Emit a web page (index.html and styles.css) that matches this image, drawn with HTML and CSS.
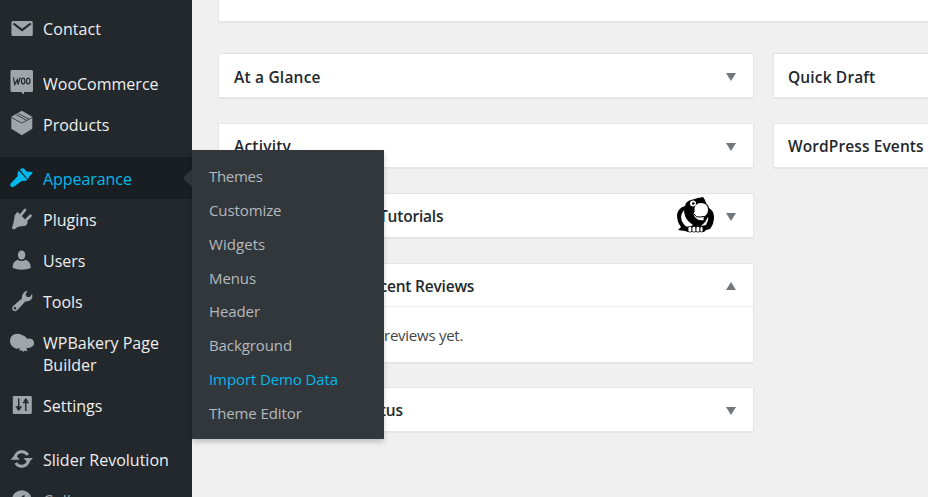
FILE: index.html
```html
<!DOCTYPE html>
<html lang="en">
<head>
<meta charset="utf-8">
<title>Dashboard</title>
<link rel="stylesheet" href="styles.css">
</head>
<body>
<div class="app">
  <nav class="sidebar">
    <a class="item"><svg viewBox="0 0 24 24"><rect x="1.400" y="5" width="21.400" height="15" rx="1.600"/><path class="cut" d="M3.500 7.500l8.600 6.600 8.600-6.600"/></svg><span class="t-contact">Contact</span></a>
    <a class="item group high"><svg viewBox="0 0 24 24"><path d="M2 0h19.500q1.500 0 1.500 1.500v19q0 1.500-1.500 1.500H14v2.500L11 22H2Q.5 22 .5 20.500v-19Q.5 0 2 0z"/><path class="cut thin" d="M3.500 7.500l1.300 7 2.600-5 .6 5 2.300-7"/><ellipse class="cut thin" cx="13.200" cy="11" rx="1.700" ry="2.900"/><ellipse class="cut thin" cx="18.200" cy="11" rx="1.700" ry="2.900"/></svg><span class="t-woo">WooCommerce</span></a>
    <a class="item high"><svg viewBox="0 0 24 24"><path d="M11.800-.2L22.300 5.700v12L11.800 24.300 1.300 17.700v-12z"/><path class="cut hair" d="M1.300 6.500l10.500 5.600L22.300 6.500M6.200 3.800l10.400 5.500M8.300 2.700L19 8.200"/></svg><span class="t-prod">Products</span></a>
    <a class="item current"><svg viewBox="0 0 24 24"><path d="M10 2.600q1.800-2 3.800-1l3.400 3.200q2.600-.3 5.600.2-.6 2.600-3.300 4.200l-1.700 3.200z"/><path d="M8.800 3.600l8.500 9.300q-2.400 1.600-5.300.8l-7 5.300q-2 1.500-3.800.7-1.800-1.400-.4-3.500l6.800-7q-.8-2.800 1.200-5.600z"/></svg><span class="t-app">Appearance</span></a>
    <a class="item"><svg viewBox="0 0 24 24"><path d="M7.500 4.800l10.500 10.500-2 3.500-6.500.7-3.200 1.200q-1.700 2.200-3.600 1.300-1.700-1.500 0-3.200l.8-3.400 1.300-7.400z"/><path class="prong" d="M11 8l4-5M16 13.200l4.500-4.500"/></svg><span class="t-plug">Plugins</span></a>
    <a class="item"><svg viewBox="0 0 24 24"><ellipse cx="11.600" cy="7" rx="3.700" ry="4.600"/><path d="M2.600 20q-.2-6.500 5-8.200 4 2.600 8 0 5.300 1.700 5.200 8.200-4 1.700-9 1.700t-9.200-1.700z"/></svg><span class="t-users">Users</span></a>
    <a class="item"><svg viewBox="0 0 24 24"><path d="M17.500 2l-2 3.500 1.500 2.400 3 .2 2.100-3.300q1.200 4.300-1.800 6.500-2.300 1.500-4.800 1L7.700 20.800q-2.200 2.500-4.700.7-2-2.400.5-4.700l8.600-7.600q-.5-3 1.200-5Q15 2 17.500 2z"/><circle class="hole" cx="5" cy="19.300" r="1.200"/></svg><span class="t-tools">Tools</span></a>
    <a class="item two"><svg viewBox="0 0 24 24"><path d="M0 10.500q.3-5 5-6.500 4-1 7 1 4.300 1.600 5 3.800 5.500-1.200 7 3.200.5 4-3.500 5.500-2.500.8-4 .2l.8 3.800-2.300-1-1.500 1.200-2.500-1.400-2 .2 1-2.500q-3 1.600-5.500 0Q0 15.500 0 10.500z"/></svg><span class="t-wpb">WPBakery Page<br><i class="t-build">Builder</i></span></a>
    <a class="item"><svg viewBox="0 0 24 24"><rect x="2.800" y="3" width="19" height="18" rx="1.300"/><path class="cut set" d="M8.700 5.500v11.500M5.700 14h6M15.800 6v12M12.800 9.500h6M7 15l1.700 2 1.700-2M14.100 8.200l1.700-2 1.700 2"/></svg><span class="t-set">Settings</span></a>
    <a class="item group"><svg viewBox="0 0 24 24"><path class="ring" d="M5.300 9.500A7 7 0 0 1 17.800 8M18.300 14.500A7 7 0 0 1 5.800 16"/><path d="M.5 12.800l4.700-5.300 4.700 5.300zM13.500 11h9.400l-4.700 5.300z"/></svg><span class="t-slide">Slider Revolution</span></a>
    <a class="item collapse"><svg viewBox="0 0 24 24"><circle cx="11.800" cy="12" r="9.800"/><path class="hole" d="M14.500 6.500v11l-7-5.500z"/></svg><span>Collapse</span></a>
    <div class="submenu">
      <a class="s1">Themes</a>
      <a class="s2">Customize</a>
      <a class="s3">Widgets</a>
      <a class="s4">Menus</a>
      <a class="s5">Header</a>
      <a class="s6">Background</a>
      <a class="s7 on">Import Demo Data</a>
      <a class="s8">Theme Editor</a>
    </div>
  </nav>
  <main class="content">
    <section class="card welcome"></section>
    <div class="columns">
      <div class="column">
        <section class="card"><h2><span class="c1">At a Glance</span><b class="down"></b></h2></section>
        <section class="card"><h2><span class="c2">Activity</span><b class="down"></b></h2></section>
        <section class="card"><h2><span class="c3">Tutorials</span>
          <svg class="bird" viewBox="0 0 37 36"><path d="M14 3l7-2 5-1 2 3 1 3q3 3 3 5 5 3 5 9 0 7-4 12l-4 1-2 2H11l-3-1-7-1 3-3Q0 25 0 18 1 11 8 9q1-5 6-6z"/><path class="w" d="M17.500 11q1.500-5 6.500-5 7 0 7 7 0 4-4 6.500-1 2.500 0 3.500-4 1-7-1-3-2-3.500-5 1.500-2 1-6zM7 13q0 6 4 11l5 4-3 1.500q-4 1-6-2-6-7 0-14.500zM31 20q1 2-2 8l-5 1q5-4 7-9z"/><circle class="w" cx="16" cy="6.500" r="3"/><circle cx="16.300" cy="6.500" r="1.300"/><path class="line" d="M17 17q2 4 6 3l4-.5"/><g class="feet"><rect x="11" y="29.500" width="4" height="5.500" rx="1.500"/><rect x="15" y="29.500" width="4" height="5.500" rx="1.500"/><rect x="19" y="29.500" width="4" height="5.500" rx="1.500"/><rect x="23" y="29.500" width="3" height="5.500" rx="1.500"/></g></svg>
          <b class="down"></b></h2></section>
        <section class="card reviews"><h2><span class="c4">Recent Reviews</span><b class="up"></b></h2><p><span>reviews yet.</span></p></section>
        <section class="card"><h2><span class="c5">Status</span><b class="down"></b></h2></section>
      </div>
      <div class="column">
        <section class="card"><h2><span class="c6">Quick Draft</span></h2></section>
        <section class="card"><h2><span class="c7">WordPress Events</span></h2></section>
      </div>
    </div>
  </main>
</div>
</body>
</html>
```
FILE: styles.css
```css
* { box-sizing: border-box; }
body { margin: 0; background: #f0f0f0; font-family: "Open Sans", "Noto Sans", sans-serif; overflow: hidden; }
.app { display: flex; width: 928px; height: 497px; overflow: hidden; }
.sidebar { position: relative; z-index: 2; flex: 0 0 192px; height: 497px; padding-top: 8px; background: #23282d; }
.item { display: flex; align-items: flex-start; height: 41px; padding: 10px 0 0 10px; color: #eee; font-size: 16px; line-height: 22px; white-space: nowrap; }
.item svg { flex: 0 0 24px; width: 24px; height: 24px; margin: -2px 9px 0 0; fill: #a0a5aa; overflow: visible; }
.item i { font-style: normal; }
.group { margin-top: 13px; }
.item.high { padding-top: 11px; }
.high svg { margin-top: -3px; }
.item.current { position: relative; height: 42px; margin-top: 13px; padding-top: 11px; background: #191e23; color: #00b9eb; }
.current svg { fill: #00b9eb; margin-top: -1px; }
.current::after { content: ""; position: absolute; right: 0; top: 12px; border: 9.500px solid transparent; border-right-color: #32373c; border-left-width: 0; }
.item.two { height: 63px; }
.collapse { color: #a0a5aa; }
svg .cut { fill: none; stroke: #23282d; stroke-width: 2.200; }
svg .thin { stroke-width: 1.200; }
svg .hair { stroke-width: .8; }
svg .set { stroke-width: 1.400; }
svg .hole { fill: #23282d; }
svg .prong { stroke: #a0a5aa; stroke-width: 2.800; stroke-linecap: round; }
svg .ring { fill: none; stroke: #a0a5aa; stroke-width: 3; }
.t-contact { letter-spacing: .1px; }
.t-app { letter-spacing: -.06px; }
.submenu { position: absolute; left: 192px; top: 150px; width: 192px; height: 289px; padding: 10px 0 0 17px; background: #32373c; box-shadow: 0 3px 5px rgba(0,0,0,.2); color: #b4b9be; font-size: 15px; line-height: 33.850px; }
.submenu a { display: block; height: 33.850px; letter-spacing: -.1px; white-space: nowrap; }
.submenu .s1 { letter-spacing: -.3px; }
.submenu .s3 { letter-spacing: .05px; }
.submenu .on { color: #00b9eb; }
.content { flex: 1 0 736px; padding-left: 26px; }
.card { border: 1px solid #e5e5e5; background: #fff; box-shadow: 0 1px 1px rgba(0,0,0,.04); }
.welcome { height: 22px; border-top: 0; margin-bottom: 31px; }
.columns { display: grid; grid-template-columns: 536px 536px; gap: 19px; }
.column { display: flex; flex-direction: column; gap: 25px; }
.column .card { height: 45px; }
.column .reviews { height: 100px; margin-bottom: -1px; }
h2 { display: flex; align-items: center; height: 43px; margin: 0; padding: 2px 17px 0 15px; color: #23282d; font-size: 15.500px; font-weight: 600; line-height: 22px; white-space: nowrap; }
.card + .card h2 span { margin-top: -2px; }
.card.reviews h2 span { margin-top: 0; }
h2 b { margin-left: auto; border: 5px solid transparent; margin-top: 1px; }
.down { border-top: 8px solid #72777c; border-bottom: 0; }
.up { border-bottom: 8px solid #72777c; border-top: 0; }
h2 .up { margin-top: -1px; }
.reviews h2 { border-bottom: 1px solid #eee; }
.reviews p { margin: 0; padding: 17px 0 0 165px; color: #444; font-size: 15px; line-height: 22px; letter-spacing: -.25px; }
.bird { width: 37px; height: 36px; margin: -4px 0 0 auto; }
.bird + b { margin-left: 12px; }
.bird .w { fill: #fff; }
.bird .line { fill: none; stroke: #000; stroke-width: 1; }
.feet { fill: #fff; stroke: #000; stroke-width: .8; }
.c1 { letter-spacing: .2px; }
.c2 { letter-spacing: .2px; }
.c3 { margin-left: 145px; letter-spacing: -.2px; }
.c4 { margin-left: 127px; letter-spacing: -.2px; }
.c5 { margin-left: 122px; }
.c6, .c7 { margin-left: -1px; letter-spacing: .15px; }
.c7 { letter-spacing: .1px; }
```
